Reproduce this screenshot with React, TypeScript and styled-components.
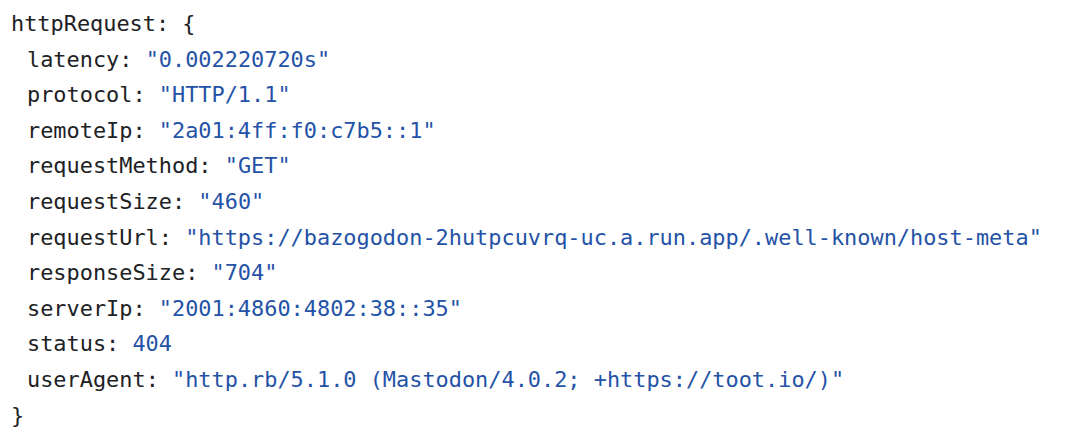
import React from "react";
import styled, { createGlobalStyle } from "styled-components";

const Global = createGlobalStyle`
  html, body { margin: 0; padding: 0; background: #ffffff; }
`;

const Block = styled.div`
  font-family: "DejaVu Sans Mono", "Liberation Mono", monospace;
  font-size: 21.9px;
  line-height: 35.6px;
  color: #202124;
  padding: 6px 0 0 11px;
  white-space: pre;
`;

const Line = styled.div<{ $indent?: boolean }>`
  padding-left: ${(p) => (p.$indent ? "16px" : "0")};
`;

const Val = styled.span`
  color: #2452a6;
`;

const fields: [string, string][] = [
  ["latency", '"0.002220720s"'],
  ["protocol", '"HTTP/1.1"'],
  ["remoteIp", '"2a01:4ff:f0:c7b5::1"'],
  ["requestMethod", '"GET"'],
  ["requestSize", '"460"'],
  ["requestUrl", '"https://bazogodon-2hutpcuvrq-uc.a.run.app/.well-known/host-meta"'],
  ["responseSize", '"704"'],
  ["serverIp", '"2001:4860:4802:38::35"'],
  ["status", "404"],
  ["userAgent", '"http.rb/5.1.0 (Mastodon/4.0.2; +https://toot.io/)"'],
];

export default function App() {
  return (
    <>
      <Global />
      <Block>
        <Line>httpRequest: {"{"}</Line>
        {fields.map(([k, v]) => (
          <Line $indent key={k}>
            {k}: <Val>{v}</Val>
          </Line>
        ))}
        <Line>{"}"}</Line>
      </Block>
    </>
  );
}
